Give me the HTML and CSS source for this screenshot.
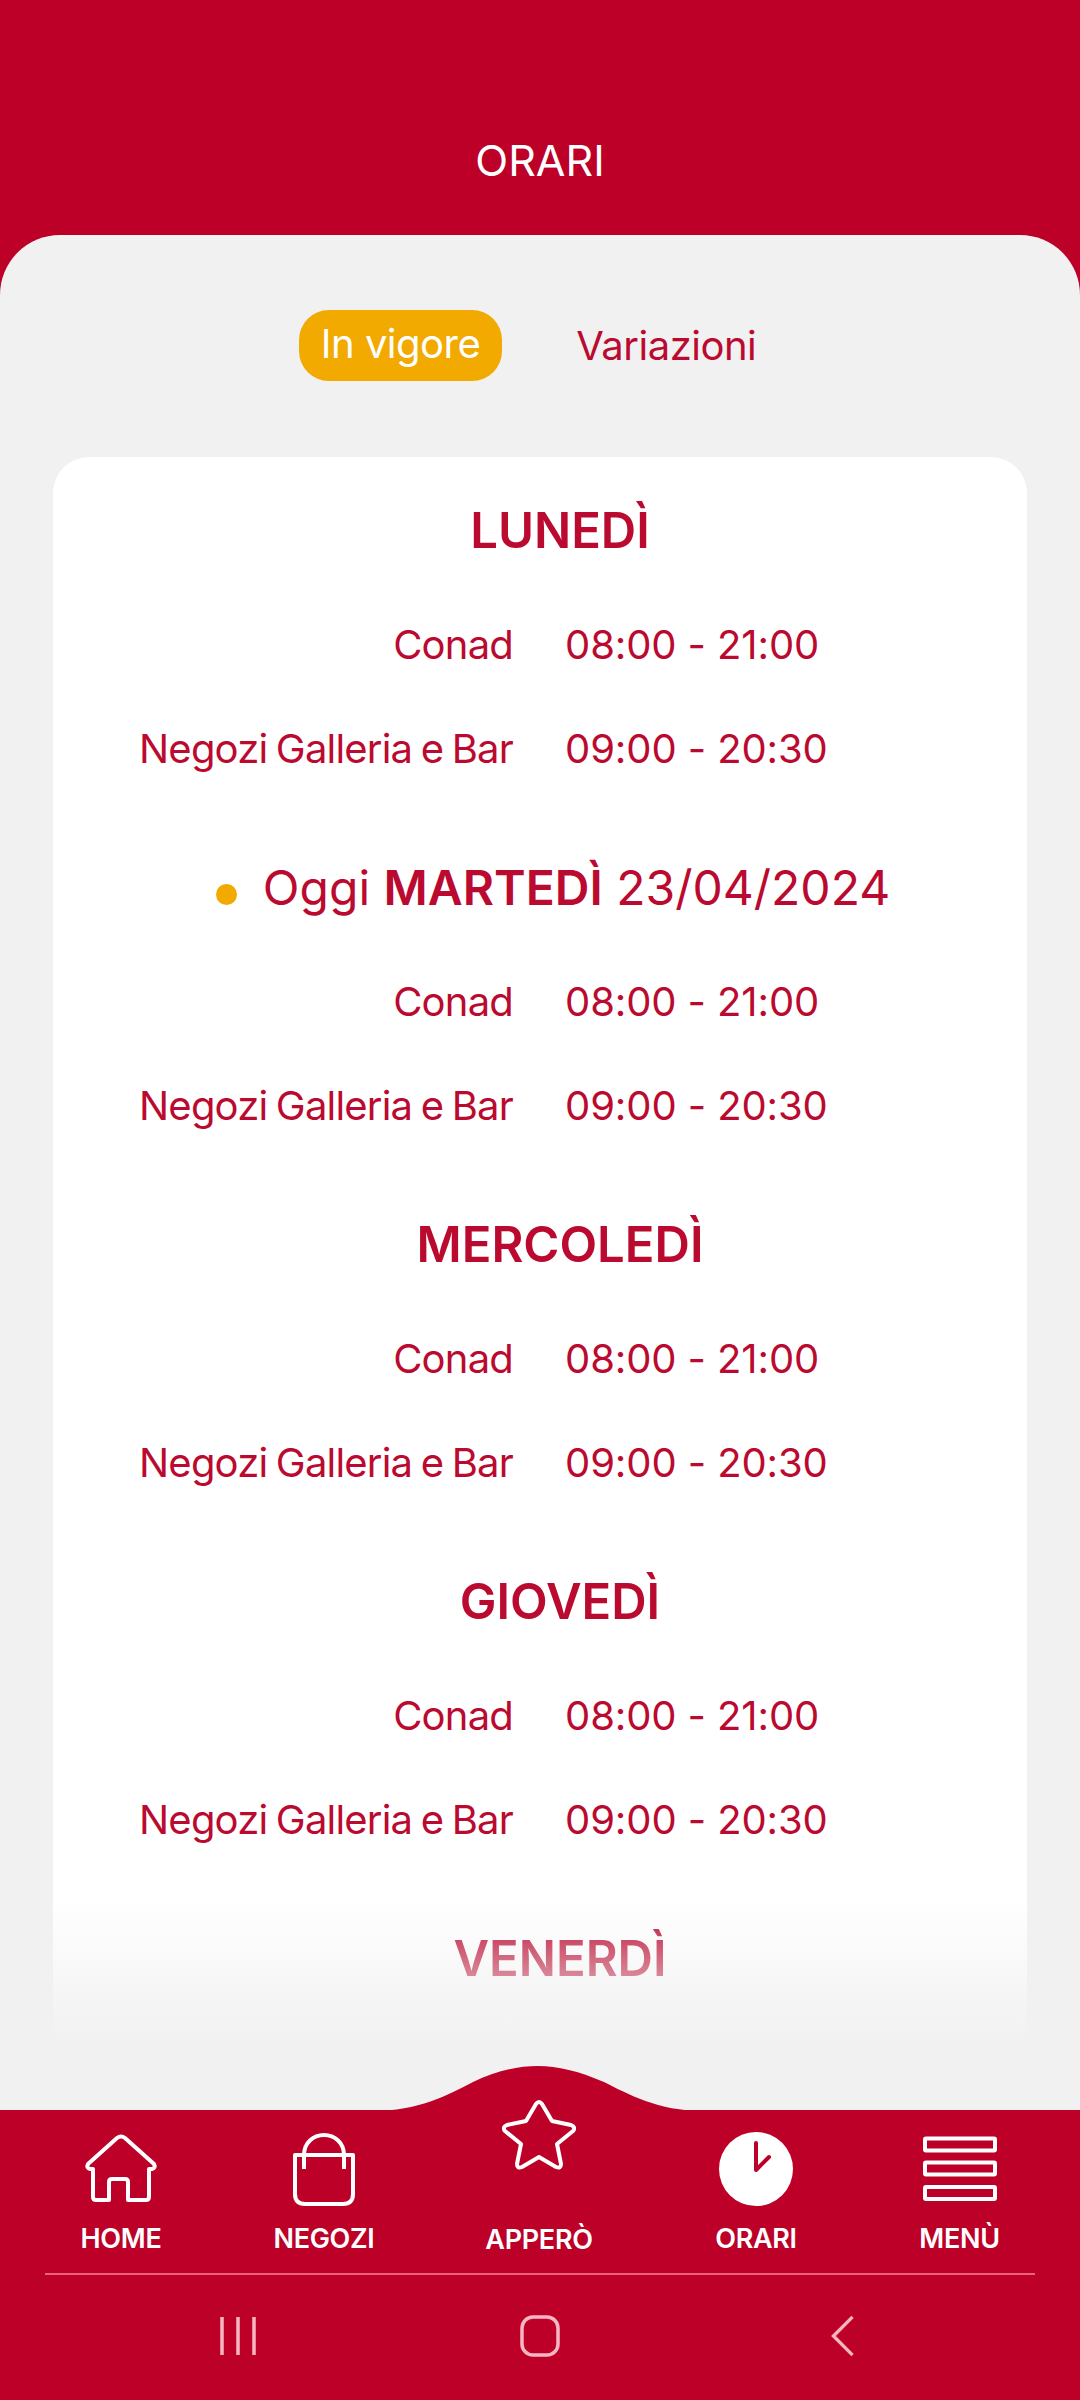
FILE: index.html
```html
<!DOCTYPE html>
<html lang="it">
<head>
    <meta charset="UTF-8">
    <meta name="viewport" content="width=device-width, initial-scale=1.0">
    <title>Orari</title>
    <link rel="stylesheet" href="styles.css">
</head>
<body>
    <div class="page">
        <div class="header">
            <h1>ORARI</h1>
        </div>

        <div class="sheet">
            <div class="tabs">
                <div class="tab active">In vigore</div>
                <div class="tab">Variazioni</div>
            </div>

            <div class="card">
                <div class="day">
                    <h2 class="day-title">LUNEDÌ</h2>
                    <div class="row"><span class="place">Conad</span><span class="hours">08:00 - 21:00</span></div>
                    <div class="row"><span class="place">Negozi Galleria e Bar</span><span class="hours">09:00 - 20:30</span></div>
                </div>
                <div class="day">
                    <h2 class="day-title today"><span class="dot"></span>Oggi <b>MARTEDÌ</b> 23/04/2024</h2>
                    <div class="row"><span class="place">Conad</span><span class="hours">08:00 - 21:00</span></div>
                    <div class="row"><span class="place">Negozi Galleria e Bar</span><span class="hours">09:00 - 20:30</span></div>
                </div>
                <div class="day">
                    <h2 class="day-title">MERCOLEDÌ</h2>
                    <div class="row"><span class="place">Conad</span><span class="hours">08:00 - 21:00</span></div>
                    <div class="row"><span class="place">Negozi Galleria e Bar</span><span class="hours">09:00 - 20:30</span></div>
                </div>
                <div class="day">
                    <h2 class="day-title">GIOVEDÌ</h2>
                    <div class="row"><span class="place">Conad</span><span class="hours">08:00 - 21:00</span></div>
                    <div class="row"><span class="place">Negozi Galleria e Bar</span><span class="hours">09:00 - 20:30</span></div>
                </div>
                <div class="day">
                    <h2 class="day-title">VENERDÌ</h2>
                    <div class="row"><span class="place">Conad</span><span class="hours">08:00 - 21:00</span></div>
                </div>
            </div>

            <div class="fade"></div>
        </div>

        <div class="footer">
            <svg class="hump" viewBox="0 0 330 46" aria-hidden="true">
                <path d="M0 46C45 46 75 30 100 17C122 6 145 1 165 1C185 1 205 6 231 17C255 29 285 46 330 46Z"/>
            </svg>

            <div class="tabbar">
                <div class="tabbar-item">
                    <svg class="icon" viewBox="0 0 74 74" aria-hidden="true">
                        <path d="M33 6Q37 3 41 6L70 32Q72 36 68 37H65V65Q65 68 62 68H44V50Q44 47 41 47H28Q25 47 25 50V68H12Q9 68 9 65V37H6Q2 36 4 32Z"/>
                    </svg>
                    <span>HOME</span>
                </div>
                <div class="tabbar-item">
                    <svg class="icon" viewBox="0 0 74 74" aria-hidden="true">
                        <path d="M8 23H66V62Q66 72 56 72H18Q8 72 8 62Z"/>
                        <path d="M17 37V23C17 11 26 3 37 3S57 11 57 23V37"/>
                    </svg>
                    <span>NEGOZI</span>
                </div>
                <div class="tabbar-item apero">
                    <svg class="icon star" viewBox="0 0 74 74" aria-hidden="true">
                        <path d="M34 5Q37 1 40 5L50 22L69 26Q74 28 71 32L55 45L59 65Q59 70 54 68L37 58L20 68Q15 70 15 65L19 45L3 32Q0 28 5 26L24 22Z"/>
                    </svg>
                    <span>APPERÒ</span>
                </div>
                <div class="tabbar-item">
                    <svg class="icon" viewBox="0 0 74 74" aria-hidden="true">
                        <circle class="solid" cx="37" cy="37" r="37"/>
                        <path class="hand" d="M37 11V38L50 25"/>
                    </svg>
                    <span>ORARI</span>
                </div>
                <div class="tabbar-item">
                    <svg class="icon" viewBox="0 0 74 74" aria-hidden="true">
                        <rect x="2" y="6.5" width="70" height="12" rx="1"/>
                        <rect x="2" y="30.5" width="70" height="12" rx="1"/>
                        <rect x="2" y="55" width="70" height="12" rx="1"/>
                    </svg>
                    <span>MENÙ</span>
                </div>
            </div>

            <div class="divider"></div>

            <div class="navbar">
                <svg class="nav-recent" viewBox="0 0 36 42" aria-hidden="true">
                    <path d="M2 2V40M18 2V40M34 2V40"/>
                </svg>
                <svg class="nav-home" viewBox="0 0 40 42" aria-hidden="true">
                    <rect x="2" y="2" width="36" height="38" rx="11"/>
                </svg>
                <svg class="nav-back" viewBox="0 0 24 44" aria-hidden="true">
                    <path d="M22 2L2 22L22 42"/>
                </svg>
            </div>
        </div>
    </div>
</body>
</html>
```

FILE: styles.css
```css
* {
    box-sizing: border-box;
}

body {
    margin: 0;
    padding: 0;
    font-family: Inter, "Noto Sans", sans-serif;
    background-color: #bc0027;
}

.page {
    width: 1080px;
    height: 2400px;
    display: flex;
    flex-direction: column;
    overflow: hidden;
}

.header {
    height: 235px;
    flex: none;
    padding-top: 135px;
    text-align: center;
    color: white;
}

.header h1 {
    margin: 0;
    font-size: 43px;
    line-height: 50px;
    font-weight: 400;
}

.sheet {
    position: relative;
    flex: 1;
    min-height: 0;
    overflow: hidden;
    background-color: #f2f1f2;
    border-radius: 60px 60px 0 0;
}

.tabs {
    display: flex;
    align-items: center;
    justify-content: center;
    gap: 74px;
    height: 71px;
    margin-top: 75px;
    padding-right: 25px;
    font-size: 40px;
    letter-spacing: -0.5px;
    color: #bb0a30;
}

.tab.active {
    padding: 0 22px;
    height: 71px;
    line-height: 68px;
    background-color: #f2a900;
    border-radius: 30px;
    color: white;
}

.card {
    margin: 76px 53px 0;
    padding: 0 40px 0 0;
    background: white;
    border-radius: 36px;
    height: 1700px;
    color: #bb0a30;
}

.day {
    padding-bottom: 13px;
}

.day-title {
    margin: 0;
    height: 136px;
    padding: 46px 0 0 80px;
    font-size: 49px;
    line-height: 56px;
    font-weight: 600;
    text-align: center;
}

.day-title.today {
    font-weight: 400;
    font-size: 48px;
    padding-left: 66px;
}

.day-title b {
    font-weight: 600;
}

.dot {
    display: inline-block;
    width: 21px;
    height: 21px;
    margin-right: 26px;
    border-radius: 50%;
    background-color: #f2a900;
}

.row {
    display: grid;
    grid-template-columns: 460px 1fr;
    column-gap: 52px;
    height: 104px;
    font-size: 40px;
    line-height: 104px;
}

.place {
    text-align: right;
    letter-spacing: -0.8px;
    word-spacing: -2px;
}

.hours {
    letter-spacing: -0.1px;
}

.fade {
    position: absolute;
    left: 0;
    right: 0;
    bottom: 0;
    height: 210px;
    background: linear-gradient(rgba(242, 241, 242, 0), #f2f1f2 67%);
}

.footer {
    position: relative;
    flex: none;
    height: 290px;
    padding: 0 45px;
    background-color: #bc0027;
}

.hump {
    position: absolute;
    left: 373px;
    top: -45px;
    width: 330px;
    height: 46px;
    fill: #bc0027;
}

.tabbar {
    display: grid;
    grid-template-columns: 206px 200px 230px 204px 203px;
    margin: 0 -27px;
    height: 163px;
    padding-top: 22px;
}

.tabbar-item {
    display: flex;
    flex-direction: column;
    align-items: center;
    color: white;
    font-size: 27px;
    font-weight: 600;
    line-height: 30px;
    letter-spacing: -0.3px;
}

.tabbar-item span {
    margin-top: 18px;
}

.icon {
    width: 74px;
    height: 74px;
    fill: none;
    stroke: white;
    stroke-width: 4;
    stroke-linejoin: round;
    position: relative;
    z-index: 1;
}

.icon.star {
    margin-top: -33px;
    margin-bottom: 34px;
}

.icon .solid {
    fill: white;
    stroke: none;
}

.icon .hand {
    stroke: #bc0027;
    stroke-linecap: round;
}

.divider {
    height: 2px;
    background-color: #e8647c;
}

.navbar {
    display: grid;
    grid-template-columns: 300px 311px 1fr;
    align-items: center;
    height: 122px;
    padding-left: 175px;
}

.navbar svg {
    fill: none;
    stroke: #f4b6c1;
    stroke-width: 3.5;
    height: 42px;
}

.nav-recent {
    width: 36px;
}

.nav-home {
    width: 40px;
}

.nav-back {
    width: 24px;
}
```
